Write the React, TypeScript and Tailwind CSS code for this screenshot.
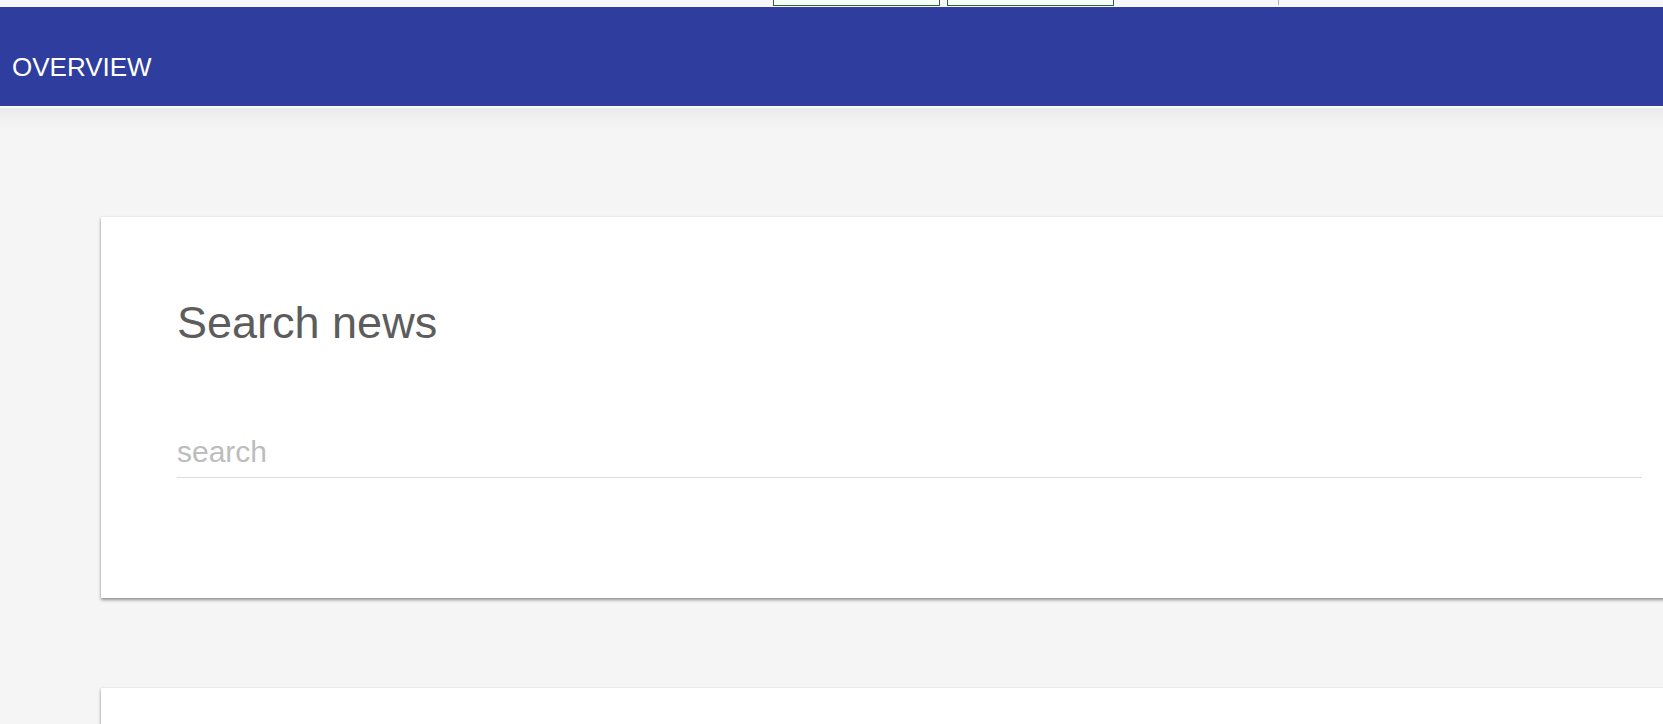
export default function App() {
  return (
    <div
      className="min-h-[724px] h-[724px] overflow-hidden bg-[#f5f5f5]"
      style={{ fontFamily: '"Liberation Sans", Arial, sans-serif' }}
    >
      {/* browser strip leftovers */}
      <div className="flex h-[7px] bg-[#f6f6fb]">
        <div className="ml-[773px] h-[6px] w-[167px] border-x border-b border-[#2f5f44] bg-[#f5fff5]" />
        <div className="ml-[7px] h-[6px] w-[167px] border-x border-b border-[#2f5f44] bg-[#f5fff5]" />
        <div className="ml-[164px] h-[5px] w-px bg-[#b0b0b0]" />
      </div>

      <header className="h-[99px] bg-[#2f3d9e] pl-3 pt-[45px]">
        <span className="block text-[26px] leading-[30px] text-white">OVERVIEW</span>
      </header>
      <div className="h-[22px] border-t-2 border-[#fafafa] bg-linear-to-b from-[#ebebeb] to-[#f5f5f5]" />

      <div className="ml-[101px] mt-[89px] h-[381px] w-[1617px] bg-white px-[76px] pt-[80px] shadow-[0_2px_3px_rgba(0,0,0,0.4),0_0_2px_rgba(0,0,0,0.08)]">
        <h1 className="text-[45px] leading-[52px] text-[#5d5d5d]">Search news</h1>
        <div className="mt-[85px] border-b border-[#dddddd] pb-[7px]">
          <input
            type="text"
            placeholder="search"
            className="h-[36px] w-full bg-transparent text-[30px] leading-[36px] text-[#5d5d5d] outline-none placeholder:text-[#bdbdbd]"
          />
        </div>
      </div>

      <div className="ml-[101px] mt-[90px] h-[200px] w-[1617px] bg-white shadow-[0_2px_3px_rgba(0,0,0,0.4),0_0_2px_rgba(0,0,0,0.08)]" />
    </div>
  );
}
